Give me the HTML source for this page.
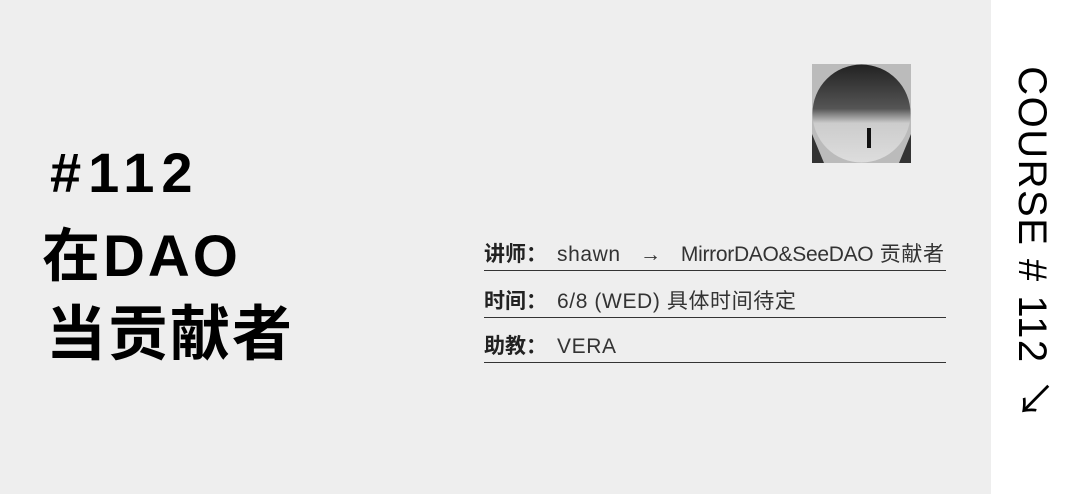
<!DOCTYPE html>
<html><head><meta charset="utf-8"><style>
body{margin:0;width:1080px;height:494px;overflow:hidden;background:#eeeeee;position:relative;font-family:"Liberation Sans","Noto Sans CJK SC",sans-serif}
.right{position:absolute;left:991px;top:0;width:89px;height:494px;background:#fff}
.t{position:absolute;color:#000;font-weight:bold;font-family:"Liberation Sans","Noto Sans CJK SC",sans-serif;white-space:nowrap}
.row{position:absolute;left:484px;width:462px;border-bottom:1.5px solid #333;font-size:21px;color:#333;height:34px;line-height:34px;white-space:nowrap;letter-spacing:0.6px}
.row b{color:#222;font-family:"Noto Sans CJK SC",sans-serif;letter-spacing:0;margin-right:10px}
.v{position:absolute;left:1036px;top:242px;transform:translate(-50%,-50%) rotate(90deg);font-size:40px;white-space:nowrap;color:#000;letter-spacing:1.5px}
</style></head><body>
<div class="right"></div>
<div class="t" style="left:50px;top:138px;font-size:56px;line-height:70px;letter-spacing:7px">#112</div>
<div class="t" style="left:42px;top:222px;font-size:58px;line-height:70px;letter-spacing:3px">在DAO</div>
<div class="t" style="left:46px;top:300px;font-size:60px;line-height:70px;letter-spacing:2px">当贡献者</div>
<div class="row" style="top:236px"><b>讲师：</b>shawn &nbsp;&nbsp;→&nbsp;&nbsp; <span style="letter-spacing:-0.3px">MirrorDAO&amp;SeeDAO</span> 贡献者</div>
<div class="row" style="top:283px"><b>时间：</b>6/8 (WED) 具体时间待定</div>
<div class="row" style="top:328px"><b>助教：</b>VERA</div>
<svg style="position:absolute;left:812px;top:64px" width="99" height="99" viewBox="0 0 99 99">
<rect width="99" height="99" fill="#bbb"/>
<defs><linearGradient id="g" x1="0" y1="0" x2="0" y2="1"><stop offset="0" stop-color="#222"/><stop offset="0.45" stop-color="#555"/><stop offset="0.6" stop-color="#ccc"/><stop offset="1" stop-color="#ddd"/></linearGradient></defs>
<circle cx="49.5" cy="49.5" r="49" fill="url(#g)"/>
<path d="M0 70 L12 99 L0 99Z M99 70 L87 99 L99 99Z" fill="#333"/>
<rect x="55" y="64" width="4" height="20" fill="#111"/>
</svg>
<div class="v">COURSE # 112 <span style="display:inline-block;transform:rotate(-90deg)">↙</span></div>
</body></html>
